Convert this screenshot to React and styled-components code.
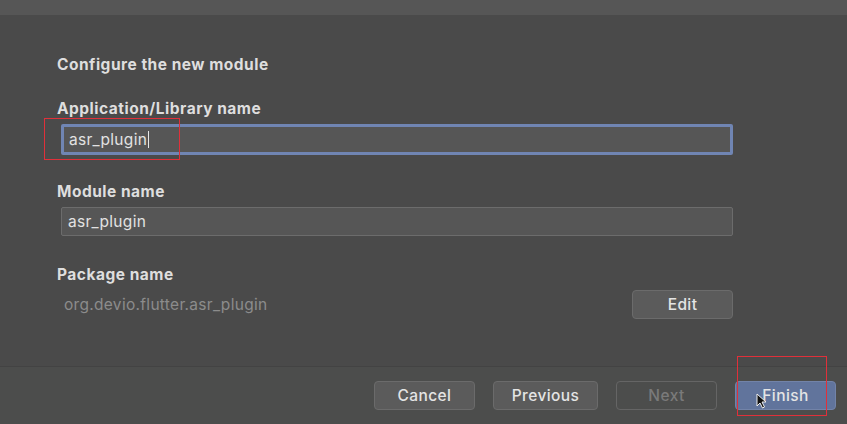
import React from "react"
import styled, { createGlobalStyle } from "styled-components"

const Global = createGlobalStyle`
    body {
        margin: 0;
        background: #4a4a4a;
        font-family: Inter, "Open Sans", sans-serif;
    }
`

const Window = styled.div`
    width: 847px;
    height: 424px;
    background: #4a4a4a;
    display: flex;
    flex-direction: column;
    position: relative;
    overflow: hidden;
`

const TopStrip = styled.div`
    height: 15px;
    background: #565656;
    flex-shrink: 0;
`

const Body = styled.div`
    flex: 1;
    padding: 42px 114px 0 57px;
    display: flex;
    flex-direction: column;
`

const Title = styled.div`
    font-size: 15.5px;
    font-weight: 700;
    letter-spacing: 0.5px;
    color: #dedede;
    line-height: 16px;
    margin-bottom: 28px;
`

const Label = styled.div`
    font-size: 15.5px;
    font-weight: 700;
    letter-spacing: 0.5px;
    color: #dedede;
    line-height: 16px;
    margin-bottom: 7px;
`

const Field = styled.div`
    margin-left: 4px;
    height: ${p => (p.$focused ? 31 : 29)}px;
    box-sizing: border-box;
    background: #565656;
    border: ${p => (p.$focused ? "3px solid #7085b3" : "1px solid #6c6c6c")};
    border-radius: 2px;
    display: flex;
    align-items: center;
    padding-left: ${p => (p.$focused ? 5 : 6)}px;
    font-size: 15.5px;
    letter-spacing: 0.3px;
    color: #e2e2e2;
    margin-bottom: ${p => p.$after}px;
`

const Caret = styled.span`
    display: inline-block;
    width: 1px;
    height: 17px;
    background: #e8e8e8;
    margin-left: 1px;
`

const PackageRow = styled.div`
    margin-left: 4px;
    display: flex;
    align-items: center;
    justify-content: space-between;
    height: 28px;
`

const PackageText = styled.div`
    font-size: 15.5px;
    letter-spacing: 0.3px;
    color: #8c8c8c;
    padding-left: 3px;
`

const Footer = styled.div`
    height: 58px;
    border-top: 1px solid #434343;
    background: #4c4d4c;
    display: flex;
    justify-content: flex-end;
    align-items: flex-start;
    padding: 14px 11px 0 0;
    gap: 18px;
    box-sizing: border-box;
    flex-shrink: 0;
`

const Button = styled.div`
    width: ${p => p.$w || 101}px;
    height: 29px;
    box-sizing: border-box;
    border-radius: 4px;
    display: flex;
    align-items: center;
    justify-content: center;
    font-size: 15.5px;
    font-weight: 500;
    letter-spacing: 0.4px;
    color: ${p => (p.$disabled ? "#7a7a7a" : "#e4e4e4")};
    background: ${p => (p.$primary ? "#61749c" : p.$disabled ? "transparent" : "#5b5b5b")};
    border: 1px solid ${p => (p.$primary ? "#7283a8" : p.$disabled ? "#656565" : "#6b6b6b")};
`

const Mark = styled.div`
    position: absolute;
    border: 1px solid #e0303a;
    pointer-events: none;
`

const Pointer = styled.svg`
    position: absolute;
    left: 756px;
    top: 393px;
`

const App = () => {
    return (
        <>
            <Global />
            <Window>
                <TopStrip />
                <Body>
                    <Title>Configure the new module</Title>
                    <Label>Application/Library name</Label>
                    <Field $focused $after={29}>
                        asr_plugin<Caret />
                    </Field>
                    <Label>Module name</Label>
                    <Field $after={31}>asr_plugin</Field>
                    <Label>Package name</Label>
                    <PackageRow>
                        <PackageText>org.devio.flutter.asr_plugin</PackageText>
                        <Button>Edit</Button>
                    </PackageRow>
                </Body>
                <Footer>
                    <Button>Cancel</Button>
                    <Button $w={105}>Previous</Button>
                    <Button $disabled>Next</Button>
                    <Button $primary>Finish</Button>
                </Footer>
                <Mark style={{ left: 44, top: 118, width: 134, height: 40 }} />
                <Mark style={{ left: 737, top: 356, width: 88, height: 58 }} />
                <Pointer width="12" height="16" viewBox="0 0 12 16">
                    <path d="M1 1 L1 13 L4 10 L6.5 15 L8.5 14 L6 9 L10 9 Z" fill="#111" stroke="#eee" strokeWidth="1" />
                </Pointer>
            </Window>
        </>
    )
}

export default App
